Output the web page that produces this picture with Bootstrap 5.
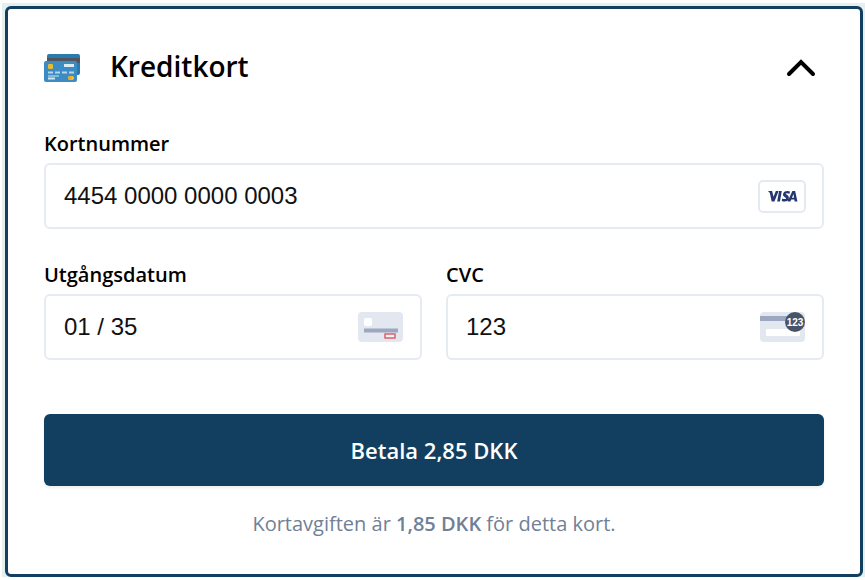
<!DOCTYPE html>
<html lang="sv">
<head>
<meta charset="utf-8">
<meta name="viewport" content="width=device-width, initial-scale=1">
<title>Kreditkort</title>
<link href="https://cdn.jsdelivr.net/npm/bootstrap@5.3.0/dist/css/bootstrap.min.css" rel="stylesheet">
<style>
body{font-family:"Segoe UI","Open Sans","Noto Sans",sans-serif;color:#000;background:#fff}
.pay-shell{margin:3px 0 0 2px;padding:3px 2px 0 3px;background:#e4efef}
.pay-card{border:3px solid #123f5f;border-radius:6px;padding:34px 36px 36px}
.pay-head{height:50px;margin-bottom:37px}
.pay-title{font-size:28px;font-weight:600;line-height:46px;padding:0 0 4px 6px}
.pay-toggle{padding:0 8px}
.pay-label{font-size:20px;font-weight:600;line-height:28px;margin-bottom:5px}
.pay-field{border:2px solid #e6eaf2;border-radius:6px;height:66px;padding:0 16px 0 18px}
.pay-field input{font:24px/32px "Liberation Sans",Arial,sans-serif;color:#111;padding:0;height:36px;min-width:0}
.pay-field input:focus{box-shadow:none}
.pay-rows{row-gap:32px}
.pay-button{background:#123f5f;color:#fff;border-radius:6px;height:72px;font-size:22px;font-weight:600;margin-top:54px;box-shadow:0 2px 3px #00000012}
.pay-button:hover{background:#0e3450;color:#fff}
.pay-note{color:#718096;font-size:20px;line-height:28px;margin-top:24px}
.pay-note strong{font-weight:600}
</style>
<script src="https://cdn.jsdelivr.net/npm/bootstrap@5.3.0/dist/js/bootstrap.bundle.min.js"></script>
</head>
<body>
<main class="pay-shell">
<form class="pay-card bg-white">
<div class="pay-head d-flex align-items-center">
<svg width="36" height="28" viewBox="0 0 36 28" aria-hidden="true">
<rect x="3" y="0" width="33" height="21" rx="2" fill="#2c79ae"/><path d="M3 4h33v5H3z" fill="#50565d"/><rect x="0" y="7" width="33" height="21" rx="2" fill="#3b8bc4"/>
<rect x="4" y="10" width="5" height="5" rx="1" fill="#e5bd32"/><rect x="20" y="10" width="10" height="3" fill="#dceaf4"/>
<path d="M4 18.500h5m2 0h5m2 0h5m2 0h5" stroke="#b8d6eb" stroke-width="2"/><path d="M4 22h11" stroke="#86b8dc" stroke-width="2"/><path d="M4 24.500h7" stroke="#d1e4f2" stroke-width="2"/>
<rect x="24" y="22" width="6" height="4" rx="2" fill="#f6c52f"/><circle cx="26" cy="24" r="2" fill="#efa62d"/>
</svg>
<h1 class="pay-title mb-0 ms-4 flex-grow-1">Kreditkort</h1>
<button type="button" class="pay-toggle btn border-0" aria-label="Dölj kreditkort"><svg class="d-block" width="30" height="18" viewBox="0 0 30 18"><path d="M3 15L15 3l12 12" fill="none" stroke="#000" stroke-width="4" stroke-linecap="round"/></svg></button>
</div>
<div class="pay-rows row">
<div class="col-12">
<label class="pay-label d-block" for="number">Kortnummer</label>
<div class="pay-field d-flex align-items-center">
<input class="form-control border-0 rounded-0" id="number" value="4454 0000 0000 0003" inputmode="numeric">
<svg class="flex-shrink-0" width="48" height="33" viewBox="0 0 48 33" role="img" aria-label="Visa"><rect x="1" y="1" width="46" height="31" rx="4" fill="#fff" stroke="#e4e9f2" stroke-width="2"/>
<g transform="translate(10 11)" fill="#26366f"><path d="M0 0h4.500l1.500 6 2.500-6h3L7 11H4L2 2zM12 0h3l-2 11h-3zM24 .5l-.7 2.500c-2-1-4-.8-4 0 0 1 3.400 1.200 3.400 4 0 4-4.500 4.700-7.700 3.400l.5-2.600c2 1 4 1 4.200 0 .2-1-3.400-1.200-3.400-4C16.300 0 21-.7 24 .5zM26.500 0h3L32 11h-3l-.4-2h-3.300l-1 2h-3zm1.200 3.200L26 7h2.300z" transform="scale(.92 .95)"/></g></svg>
</div></div>
<div class="col-6">
<label class="pay-label d-block" for="expiry">Utgångsdatum</label>
<div class="pay-field d-flex align-items-center">
<input class="form-control border-0 rounded-0" id="expiry" value="01 / 35" inputmode="numeric">
<svg class="flex-shrink-0" width="46" height="30" viewBox="0 0 46 30" aria-hidden="true"><rect width="45" height="30" rx="4" fill="#e2e7f0"/><rect x="6" y="6" width="8" height="8" rx="2" fill="#fff"/><path d="M6 18.500h34" stroke="#9da8c0" stroke-width="4"/><rect x="27" y="22" width="10" height="4" fill="#eef1f6" stroke="#dc6269" stroke-width="1.500"/></svg>
</div></div>
<div class="col-6">
<label class="pay-label d-block" for="cvc">CVC</label>
<div class="pay-field d-flex align-items-center">
<input class="form-control border-0 rounded-0" id="cvc" value="123" inputmode="numeric">
<svg class="flex-shrink-0" width="46" height="32" viewBox="0 0 46 32" aria-hidden="true"><rect y="1" width="45" height="30" rx="4" fill="#e2e7f0"/><path d="M0 5h35v5H0z" fill="#9da8c0"/><rect x="6" y="18" width="34" height="7" rx="1" fill="#fff"/><circle cx="35" cy="11" r="10" fill="#475369"/><text x="35" y="15" text-anchor="middle" fill="#fff" font-family="Liberation Sans,Arial,sans-serif" font-size="10" font-weight="700">123</text></svg>
</div></div>
</div>
<button type="submit" class="pay-button btn border-0 w-100">Betala 2,85 DKK</button>
<p class="pay-note text-center mb-0">Kortavgiften är <strong>1,85 DKK</strong> för detta kort.</p>
</form>
</main>
</body>
</html>
